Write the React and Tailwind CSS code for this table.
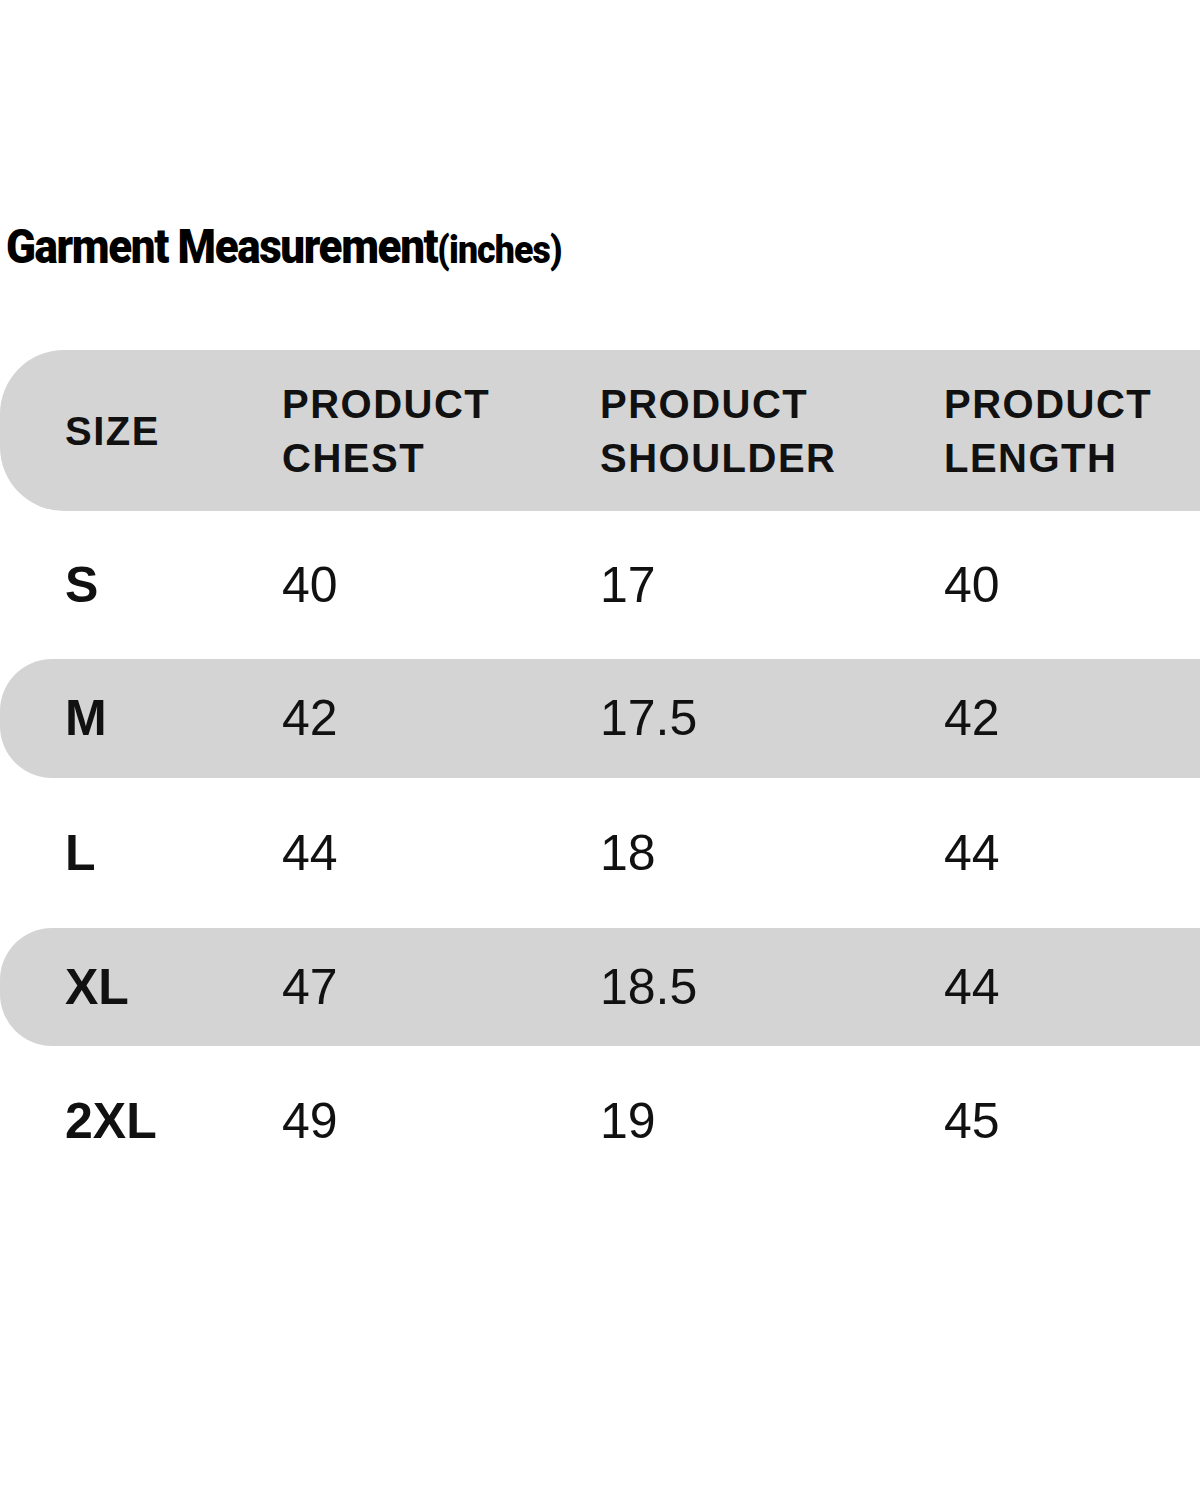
const rows = [
  { size: "S", chest: "40", shoulder: "17", length: "40", band: false, h: "h-[148px]" },
  { size: "M", chest: "42", shoulder: "17.5", length: "42", band: true, h: "h-[119px]" },
  { size: "L", chest: "44", shoulder: "18", length: "44", band: false, h: "h-[150px]" },
  { size: "XL", chest: "47", shoulder: "18.5", length: "44", band: true, h: "h-[118px]" },
  { size: "2XL", chest: "49", shoulder: "19", length: "45", band: false, h: "h-[150px]" },
];

function Row({ r }) {
  return (
    <div
      className={`grid grid-cols-[282px_318px_344px_1fr] items-center ${r.h} ${
        r.band ? "bg-[#d4d4d4] rounded-l-[52px]" : ""
      }`}
    >
      <div className="pl-[65px] font-bold">{r.size}</div>
      <div>{r.chest}</div>
      <div>{r.shoulder}</div>
      <div>{r.length}</div>
    </div>
  );
}

export default function App() {
  return (
    <div className="w-[1200px] h-[1504px] bg-white text-[#111] overflow-hidden font-['Liberation_Sans',Arial,sans-serif]">
      <div className="pt-[223px] pl-[6px] h-[350px]">
        <h1 className="origin-left scale-x-[0.915] whitespace-nowrap font-['Roboto',sans-serif] font-black text-[48px] leading-[48px] tracking-[-1.5px] text-black">
          Garment Measurement<span className="text-[39px] tracking-[-1px]">(inches)</span>
        </h1>
      </div>

      <div className="grid grid-cols-[282px_318px_344px_1fr] items-center h-[161px] bg-[#d4d4d4] rounded-l-[64px] font-bold text-[40px] leading-[54px] tracking-[1.5px]">
        <div className="pl-[65px]">SIZE</div>
        <div>PRODUCT<br />CHEST</div>
        <div>PRODUCT<br />SHOULDER</div>
        <div>PRODUCT<br />LENGTH</div>
      </div>

      <div className="text-[50px]">
        {rows.map((r) => (
          <Row key={r.size} r={r} />
        ))}
      </div>
    </div>
  );
}
